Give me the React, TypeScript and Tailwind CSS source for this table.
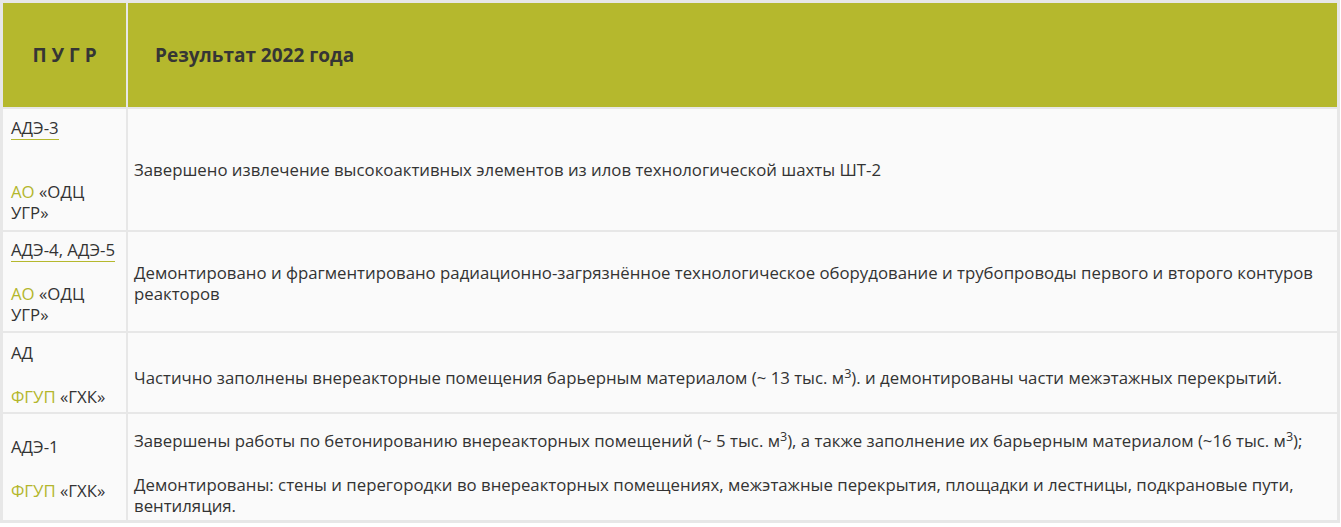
import React from "react";

const olive = "text-[#b3b62c]";

function Under({ children }: { children: React.ReactNode }) {
  return <span className="border-b border-[#b5b82d]">{children}</span>;
}

function Org({ a, b }: { a: string; b: string[] }) {
  return (
    <div>
      <span className={olive}>{a}</span>{" "}
      {b.map((w, i) => (
        <React.Fragment key={i}>
          <span>{w}</span>
          {i < b.length - 1 ? " " : null}
        </React.Fragment>
      ))}
    </div>
  );
}

export default function App() {
  return (
    <div className="w-[1341px] h-[527px] bg-white" style={{ fontFamily: '"Open Sans", "Noto Sans", sans-serif' }}>
      <div className="w-[1340px] grid grid-cols-[123px_1209px] gap-[2px] p-[3px] bg-[#e7e7e7] text-[16.8px] leading-[21px] text-[#333333]">
        {/* header */}
        <div className="h-[104px] bg-[#b5b82d] flex items-center justify-center font-bold text-[19px] text-[#353535]">
          П У Г Р
        </div>
        <div className="h-[104px] bg-[#b5b82d] flex items-center pl-[27px] font-bold text-[19px] text-[#353535]">
          Результат 2022 года
        </div>

        {/* row 1 */}
        <div className="bg-[#fafafa] pl-[8px] pr-[4px] pt-[8px] pb-[7px]">
          <div><Under>АДЭ-3</Under></div>
          <div className="mt-[43px]">
            <Org a="АО" b={["«ОДЦ", "УГР»"]} />
          </div>
        </div>
        <div className="bg-[#fafafa] px-[6px] flex items-center">
          <p>Завершено извлечение высокоактивных элементов из илов технологической шахты ШТ-2</p>
        </div>

        {/* row 2 */}
        <div className="bg-[#fafafa] pl-[8px] pr-[4px] pt-[7px] pb-[6px]">
          <div><Under>АДЭ-4, АДЭ-5</Under></div>
          <div className="mt-[23px]">
            <Org a="АО" b={["«ОДЦ", "УГР»"]} />
          </div>
        </div>
        <div className="bg-[#fafafa] px-[6px] flex items-center pt-[3px]">
          <p>
            Демонтировано и фрагментировано радиационно-загрязнённое технологическое оборудование и трубопроводы первого и второго контуров реакторов
          </p>
        </div>

        {/* row 3 */}
        <div className="bg-[#fafafa] pl-[8px] pr-[4px] pt-[9px] pb-[5px]">
          <div>АД</div>
          <div className="mt-[23px]">
            <Org a="ФГУП" b={["«ГХК»"]} />
          </div>
        </div>
        <div className="bg-[#fafafa] px-[6px] flex items-center pt-[10px]">
          <p>
            Частично заполнены внереакторные помещения барьерным материалом (~ 13 тыс. м<sup>3</sup>). и демонтированы части межэтажных перекрытий.
          </p>
        </div>

        {/* row 4 */}
        <div className="bg-[#fafafa] pl-[8px] pr-[4px] flex flex-col justify-center pt-[2px]">
          <div>АДЭ-1</div>
          <div className="mt-[23px]">
            <Org a="ФГУП" b={["«ГХК»"]} />
          </div>
        </div>
        <div className="bg-[#fafafa] px-[6px] pt-[16px] pb-[4px]">
          <p>
            Завершены работы по бетонированию внереакторных помещений (~ 5 тыс. м<sup>3</sup>), а также заполнение их барьерным материалом (~16 тыс. м<sup>3</sup>);
          </p>
          <p className="mt-[23px]">
            Демонтированы: стены и перегородки во внереакторных помещениях, межэтажные перекрытия, площадки и лестницы, подкрановые пути, вентиляция.
          </p>
        </div>
      </div>
    </div>
  );
}
